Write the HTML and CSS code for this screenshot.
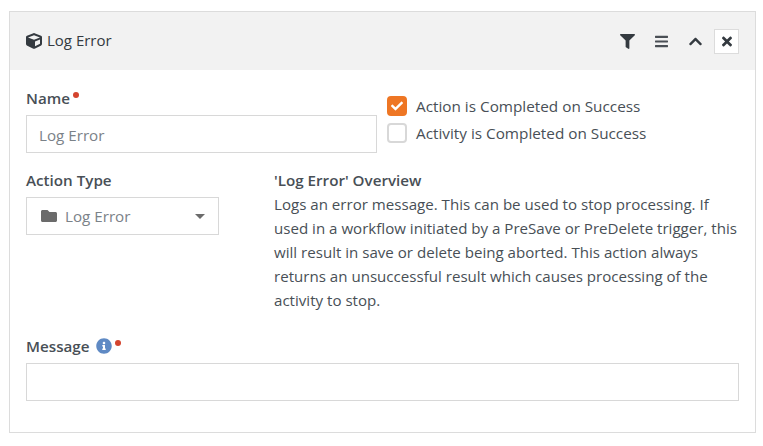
FILE: index.html
```html
<!DOCTYPE html>
<html lang="en">
<head>
<meta charset="utf-8">
<title>Log Error</title>
<link rel="stylesheet" href="styles.css">
</head>
<body>
<section class="panel">
  <header class="panel-head">
    <h1 class="panel-title">
      <svg class="cube" viewBox="0 0 512 512" width="16" height="16"><path fill="#343a40" d="M239.1 6.3l-208 78c-18.7 7-31.1 25-31.1 45v225.1c0 18.2 10.3 34.8 26.5 42.9l208 104c13.5 6.8 29.4 6.8 42.9 0l208-104c16.3-8.1 26.5-24.8 26.5-42.9V129.3c0-20-12.4-37.9-31.1-44.9l-208-78C262 2.2 250 2.2 239.1 6.3zM256 68.4l192 72v1.1l-192 78-192-78v-1.1l192-72zm32 356V275.5l160-65v133.9l-160 80z"/></svg>
      <span class="title-text">Log Error</span>
    </h1>
    <div class="panel-actions">
      <svg class="act act-filter" viewBox="0 0 512 512" width="15" height="15"><path fill="#343a40" d="M487.976 0H24.028C2.71 0-8.047 25.866 7.058 40.971L192 225.941V432c0 7.831 3.821 15.17 10.237 19.662l80 55.98C298.02 518.69 320 507.493 320 487.98V225.941l184.947-184.97C520.021 25.896 509.338 0 487.976 0z"/></svg>
      <svg class="act act-bars" viewBox="0 0 448 512" width="13" height="15"><path fill="#4a4f55" d="M16 132h416c8.837 0 16-7.163 16-16V76c0-8.837-7.163-16-16-16H16C7.163 60 0 67.163 0 76v40c0 8.837 7.163 16 16 16zm0 160h416c8.837 0 16-7.163 16-16v-40c0-8.837-7.163-16-16-16H16c-8.837 0-16 7.163-16 16v40c0 8.837 7.163 16 16 16zm0 160h416c8.837 0 16-7.163 16-16v-40c0-8.837-7.163-16-16-16H16c-8.837 0-16 7.163-16 16v40c0 8.837 7.163 16 16 16z"/></svg>
      <svg class="act act-up" viewBox="0 0 448 512" width="13" height="15"><path fill="#343a40" d="M240.971 130.524l194.343 194.343c9.373 9.373 9.373 24.569 0 33.941l-22.667 22.667c-9.357 9.357-24.522 9.375-33.901.04L224 227.495 69.255 381.516c-9.379 9.335-24.544 9.317-33.901-.04l-22.667-22.667c-9.373-9.373-9.373-24.569 0-33.941L207.03 130.525c9.372-9.373 24.568-9.373 33.941-.001z"/></svg>
      <button class="close" type="button"><svg viewBox="0 0 352 512" width="10" height="15"><path fill="#343a40" d="M242.72 256l100.07-100.07c12.28-12.28 12.28-32.19 0-44.48l-22.24-22.24c-12.28-12.28-32.19-12.28-44.48 0L176 189.28 75.93 89.21c-12.28-12.28-32.19-12.28-44.48 0L9.21 111.45c-12.28 12.28-12.28 32.19 0 44.48L109.28 256 9.21 356.07c-12.28 12.28-12.28 32.19 0 44.48l22.24 22.24c12.28 12.28 32.2 12.28 44.48 0L176 322.72l100.07 100.07c12.28 12.28 32.2 12.28 44.48 0l22.24-22.24c12.28-12.28 12.28-32.19 0-44.48L242.72 256z"/></svg></button>
    </div>
  </header>
  <div class="panel-body">
    <div class="row-top">
      <div class="field">
        <label class="label">Name<i class="req"></i></label>
        <div class="input">Log Error</div>
      </div>
      <div class="checks">
        <div class="check"><span class="box on"><svg viewBox="0 0 512 512" width="12" height="12"><path fill="#fff" d="M173.898 439.404l-166.4-166.4c-9.997-9.997-9.997-26.206 0-36.204l36.203-36.204c9.997-9.998 26.207-9.998 36.204 0L192 312.69 432.095 72.596c9.997-9.997 26.207-9.997 36.204 0l36.203 36.204c9.997 9.997 9.997 26.206 0 36.204l-294.4 294.401c-9.998 9.997-26.207 9.997-36.204-.001z"/></svg></span>Action is Completed on Success</div>
        <div class="check"><span class="box"></span>Activity is Completed on Success</div>
      </div>
    </div>
    <div class="row-mid">
      <div class="type">
        <label class="label">Action Type</label>
        <div class="select">
          <svg class="folder" viewBox="0 0 512 512" width="16" height="16"><path fill="#6b6b6b" d="M464 128H272l-64-64H48C21.49 64 0 85.49 0 112v288c0 26.51 21.49 48 48 48h416c26.51 0 48-21.49 48-48V176c0-26.51-21.49-48-48-48z"/></svg>
          <span class="select-text">Log Error</span>
          <i class="caret"></i>
        </div>
      </div>
      <div class="overview">
        <strong>'Log Error' Overview</strong>
        <p>Logs an error message. This can be used to stop processing. If used in a workflow initiated by a PreSave or PreDelete trigger, this will result in save or delete being aborted. This action always returns an unsuccessful result which causes processing of the activity to stop.</p>
      </div>
    </div>
    <div class="field message">
      <label class="label">Message
        <svg class="info" viewBox="0 0 512 512" width="16" height="16"><path fill="#5f8ac4" d="M256 8C119.043 8 8 119.083 8 256c0 136.997 111.043 248 248 248s248-111.003 248-248C504 119.083 392.957 8 256 8zm0 110c23.196 0 42 18.804 42 42s-18.804 42-42 42-42-18.804-42-42 18.804-42 42-42zm56 254c0 6.627-5.373 12-12 12h-88c-6.627 0-12-5.373-12-12v-24c0-6.627 5.373-12 12-12h12v-64h-12c-6.627 0-12-5.373-12-12v-24c0-6.627 5.373-12 12-12h64c6.627 0 12 5.373 12 12v100h12c6.627 0 12 5.373 12 12v24z"/></svg><i class="req"></i>
      </label>
      <div class="input empty"></div>
    </div>
  </div>
</section>
</body>
</html>
```
FILE: styles.css
```css
* { box-sizing: border-box; }
html, body { margin: 0; background: #fff; }
body {
  padding: 11px 7px 13px 9px;
  font-family: "Open Sans", sans-serif;
  font-size: 15.2px;
  line-height: 24px;
  color: #484f56;
}
.panel { border: 1px solid #dcdcdc; height: 422px; width: 747px; }
.panel-head {
  height: 58px;
  background: #f2f2f2;
  display: flex;
  align-items: center;
  justify-content: space-between;
  padding: 0 16px;
}
.panel-title {
  margin: 0;
  display: flex;
  align-items: center;
  gap: 5px;
  font-size: 15px;
  font-weight: 400;
  color: #343a40;
}
.title-text { padding-bottom: 2px; }
.panel-actions { display: flex; align-items: center; }
.act-filter { margin-right: 20px; }
.act-bars { margin-right: 21px; }
.act-up { margin-right: 12px; }
.close {
  width: 25px; height: 25px;
  padding: 0;
  border: 1px solid #dcdcdc;
  background: #fff;
  display: flex; align-items: center; justify-content: center;
}
.panel-body { padding: 16px 16px 0; }
.label { display: block; font-weight: 600; color: #484f56; line-height: 24px; margin-bottom: 5px; }
.req {
  display: inline-block;
  width: 6px; height: 6px;
  border-radius: 50%;
  background: #d4442e;
  margin-left: 3px;
  vertical-align: 6px;
}
.input {
  height: 38px;
  border: 1px solid #d8d8d8;
  padding: 7px 12px 5px;
  color: #7b8288;
}
.row-top { display: grid; grid-template-columns: 351px 1fr; column-gap: 10px; }
.checks { padding-top: 7px; display: flex; flex-direction: column; gap: 1px; font-size: 15.3px; }
.check { display: flex; align-items: center; gap: 9px; height: 26px; }
.box {
  width: 20px; height: 20px;
  border: 2px solid #d8d8d8;
  border-radius: 4px;
  display: flex; align-items: center; justify-content: center;
}
.box.on { background: #ee7624; border-color: #ee7624; }
.row-mid { display: grid; grid-template-columns: 193px 1fr; column-gap: 55px; margin-top: 15px; }
.select {
  height: 38px;
  border: 1px solid #d8d8d8;
  display: flex;
  align-items: center;
  padding: 0 13px 0 14px;
  color: #7b8288;
}
.folder { margin-right: 8px; }
.select-text { flex: 1; }
.caret {
  width: 0; height: 0;
  border-left: 5px solid transparent;
  border-right: 5px solid transparent;
  border-top: 5px solid #6b6b6b;
}
.overview { font-size: 15.1px; }
.overview strong { display: block; font-weight: 600; font-size: 15.2px; }
.overview p { margin: 0; }
.message { margin-top: 22px; }
.info { vertical-align: -2px; margin-left: 3px; }
.message .req { margin-left: 3px; }
```
